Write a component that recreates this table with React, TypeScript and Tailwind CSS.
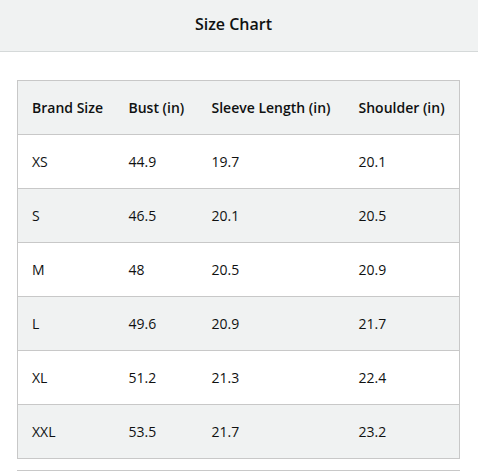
const rows = [
  { size: "XS", bust: "44.9", sleeve: "19.7", shoulder: "20.1" },
  { size: "S", bust: "46.5", sleeve: "20.1", shoulder: "20.5" },
  { size: "M", bust: "48", sleeve: "20.5", shoulder: "20.9" },
  { size: "L", bust: "49.6", sleeve: "20.9", shoulder: "21.7" },
  { size: "XL", bust: "51.2", sleeve: "21.3", shoulder: "22.4" },
  { size: "XXL", bust: "53.5", sleeve: "21.7", shoulder: "23.2" },
];

const headers = ["Brand Size", "Bust (in)", "Sleeve Length (in)", "Shoulder (in)"];

export default function App() {
  return (
    <div className="w-[478px] h-[472px] bg-white text-[#0f1111] font-['Open_Sans',sans-serif] overflow-hidden">
      <div className="h-[52px] bg-[#f0f2f2] border-b border-[#d5d9d9] flex items-center justify-center pr-[11px] pb-[4px]">
        <h1 className="text-[16px] font-semibold">Size Chart</h1>
      </div>
      <div className="pt-[28px] pl-[17px] w-[460px]">
        <table className="w-full border-collapse border border-[#c8c8c8] text-[14px]">
          <colgroup>
            <col className="w-[97px]" />
            <col className="w-[83px]" />
            <col className="w-[147px]" />
            <col />
          </colgroup>
          <thead>
            <tr className="h-[54px] bg-[#f0f2f2]">
              {headers.map((h) => (
                <th key={h} className="text-left font-semibold pl-[14px] whitespace-nowrap">
                  {h}
                </th>
              ))}
            </tr>
          </thead>
          <tbody>
            {rows.map((r, i) => (
              <tr
                key={r.size}
                className={`h-[54px] border-t border-[#c8c8c8] ${i % 2 === 1 ? "bg-[#f0f2f2]" : "bg-white"}`}
              >
                <td className="pl-[14px]">{r.size}</td>
                <td className="pl-[14px]">{r.bust}</td>
                <td className="pl-[14px]">{r.sleeve}</td>
                <td className="pl-[14px]">{r.shoulder}</td>
              </tr>
            ))}
          </tbody>
        </table>
        <div className="mt-[11px] h-px bg-[#c8c8c8]" />
      </div>
    </div>
  );
}
